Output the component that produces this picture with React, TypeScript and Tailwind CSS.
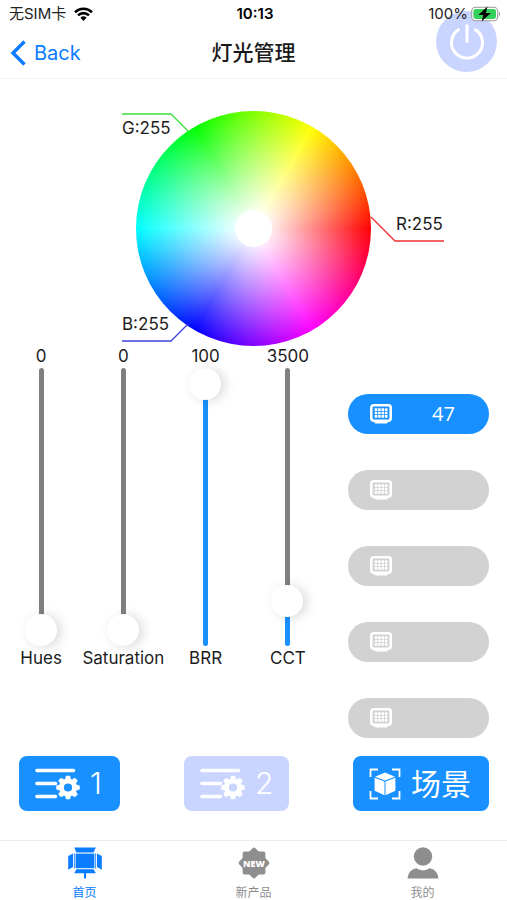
import { useState } from 'react';
import type { CSSProperties } from 'react';

type Channel = {
  id: string;
  label: string;
  min: number;
  max: number;
  value: number;
};

const CHANNELS: Channel[] = [
  { id: 'hues', label: 'Hues', min: 0, max: 360, value: 0 },
  { id: 'saturation', label: 'Saturation', min: 0, max: 100, value: 0 },
  { id: 'brr', label: 'BRR', min: 0, max: 100, value: 100 },
  { id: 'cct', label: 'CCT', min: 2700, max: 9500, value: 3500 },
];

const DEVICES = ['47', '', '', '', ''];

const GEAR_TEETH = [0, 45, 90, 135, 180, 225, 270, 315];

function WifiIcon() {
  return (
    <svg className="w-[19px] h-[14px]" viewBox="0 0 19 14" fill="none" stroke="#000" strokeWidth="2.6">
      <path d="M1 5.2a12.2 12.2 0 0 1 17 0" />
      <path d="M4 8.4a7.8 7.8 0 0 1 11 0" />
      <path d="M9.5 14 6.4 10.7a4.6 4.6 0 0 1 6.2 0z" fill="#000" stroke="none" />
    </svg>
  );
}

function BatteryIcon() {
  return (
    <svg className="w-[30px] h-[16px]" viewBox="0 0 30 16">
      <rect x="0.7" y="1.2" width="26" height="13.6" rx="4" fill="#fff" stroke="#9a9a9a" strokeWidth="1.1" />
      <path d="M28 5.8c1.4.4 1.4 4 0 4.4z" fill="#9a9a9a" />
      <rect x="2.4" y="3" width="22.6" height="10" rx="2.4" fill="#35cf5b" />
      <path d="M16.5 0.6 7.4 9h5L10.6 15.6 19.8 7h-5z" fill="#000" />
    </svg>
  );
}

function PanelIcon() {
  return (
    <svg className="w-[22px] h-5 shrink-0" viewBox="0 0 22 20" fill="none" stroke="#fff">
      <rect x="1.3" y="1.3" width="19.4" height="15.4" rx="2.4" strokeWidth="2.6" />
      <path d="M5.6 18h10.8" strokeWidth="2.8" strokeLinecap="round" />
      <path d="M4.7 5.6h12.8M4.7 9h12.8M4.7 12.4h12.8" strokeWidth="2.6" strokeDasharray="2.6 0.8" />
    </svg>
  );
}

function ListGearIcon() {
  return (
    <svg className="w-[45px] h-8 shrink-0" viewBox="0 0 45 32" fill="none" stroke="#fff">
      <path d="M2 2.5h36.5M2 15.5h18.5M2 28.5h18.5" strokeWidth="3.6" strokeLinecap="round" />
      <circle cx="33" cy="19.5" r="6.4" strokeWidth="4.6" />
      {GEAR_TEETH.map((angle) => (
        <path
          key={angle}
          d="M29.8 12.5l1.4-4.6h3.6l1.4 4.6z"
          fill="#fff"
          strokeWidth="0.4"
          transform={`rotate(${angle} 33 19.5)`}
        />
      ))}
    </svg>
  );
}

function SceneIcon() {
  return (
    <svg className="w-8 h-8 shrink-0" viewBox="0 0 32 32">
      <path
        d="M1.5 9V1.5H9M23 1.5h7.5V9M30.5 23v7.5H23M9 30.5H1.5V23"
        fill="none"
        stroke="#fff"
        strokeWidth="1.8"
      />
      <path d="M16 4.6 26 8.7 16 12.6 6 8.7z" fill="#fff" />
      <path d="M5.6 9.8 15.5 13.6V27.2L5.6 22.8z" fill="#fff" />
      <path d="M26.4 9.8 16.5 13.6V27.2L26.4 22.8z" fill="#fff" />
    </svg>
  );
}

function LampIcon() {
  return (
    <svg className="w-[34px] h-8" viewBox="0 0 34 32" fill="#0a7cff">
      <path d="M6.2 0.5h21.6l-2.2 4.9H8.4z" />
      <rect x="7.6" y="6.6" width="18.8" height="14.6" />
      <path d="M8.4 22.2h17.2l2.2 4H6.2z" />
      <path d="M0.2 9 5 6.4v13.6L0.2 22.8z" />
      <path d="M33.8 9 29 6.4v13.6l4.8 2.8z" />
      <path d="M16 25h2v6.5h-2z" />
      <path d="M6.4 6.2v15.4M27.6 6.2v15.4" stroke="#0a7cff" strokeWidth="0.8" />
    </svg>
  );
}

function NewIcon() {
  return (
    <svg className="w-8 h-8" viewBox="0 0 32 32">
      <g fill="#8e8e8e" stroke="#8e8e8e" strokeWidth="4" strokeLinejoin="round">
        <rect x="6.6" y="6.6" width="18.8" height="18.8" />
        <rect x="6.6" y="6.6" width="18.8" height="18.8" transform="rotate(45 16 16)" />
      </g>
      <text
        x="16"
        y="19.5"
        textAnchor="middle"
        fill="#fff"
        className="font-['Open_Sans',sans-serif] text-[9px] font-extrabold"
      >
        NEW
      </text>
    </svg>
  );
}

function PersonIcon() {
  return (
    <svg className="w-8 h-8" viewBox="0 0 32 32" fill="#8e8e8e">
      <circle cx="16" cy="9.5" r="9.2" />
      <path d="M0.6 31.5c.4-6 4-9.600 9-10.300 4 2.800 8.800 2.800 12.800 0 5 .7 8.600 4.300 9 10.300z" />
    </svg>
  );
}

const TABS = [
  { label: '首页', Icon: LampIcon, active: true },
  { label: '新产品', Icon: NewIcon, active: false },
  { label: '我的', Icon: PersonIcon, active: false },
];

function Header() {
  return (
    <header className="relative border-b border-[#f3f3f3]">
      {/* power toggle sits behind the battery */}
      <button
        type="button"
        aria-label="Power"
        className="absolute top-[11px] right-2.5 flex size-[61px] items-center justify-center rounded-full bg-[#c9d5ff]"
      >
        <svg className="size-9" viewBox="0 0 36 36" fill="none" stroke="#fff" strokeWidth="3">
          <path d="M10.5 5.1a15.5 15.5 0 1 0 15 0" />
          <path d="M18 0.5v18" />
        </svg>
      </button>

      {/* status bar */}
      <div className="relative grid h-7 grid-cols-3 items-center pl-[9px] pr-1.5 text-[15px] text-[#222] pointer-events-none">
        <div className="flex items-center gap-2">
          <span>无SIM卡</span>
          <WifiIcon />
        </div>
        <span className="text-center font-semibold text-black">10:13</span>
        <div className="flex items-center justify-end gap-[3px]">
          <span>100%</span>
          <BatteryIcon />
        </div>
      </div>

      {/* nav bar */}
      <div className="grid h-[50px] grid-cols-[1fr_auto_1fr] items-center px-2.5">
        <a href="#back" className="flex items-center gap-2 text-xl text-[#0a7cff]">
          <svg className="w-4 h-[26px]" viewBox="0 0 16 26" fill="none" stroke="currentColor" strokeWidth="3.4">
            <path d="M14.5 1.5 3 13l11.5 11.5" />
          </svg>
          Back
        </a>
        <h1 className="text-[21px] font-medium text-[#1a1a1a]">灯光管理</h1>
      </div>
    </header>
  );
}

function ColorWheel() {
  return (
    <div className="relative mx-auto size-[235px]">
      <div className="flex size-full items-center justify-center rounded-full bg-[radial-gradient(closest-side,#fff_8%,transparent_100%),conic-gradient(from_90deg,#f00,#f0f,#00f,#0ff,#0f0,#ff0,#f00)]">
        <div className="size-[37px] rounded-full bg-white" />
      </div>
      <svg className="absolute inset-0 size-full overflow-visible" viewBox="0 0 235 235" fill="none" strokeWidth="1.3">
        <path d="M-14 3h49l17 17" stroke="#3de03d" />
        <path d="M235 106l24 24h49" stroke="#f03030" />
        <path d="M-14 230h49l17-17" stroke="#4040e0" />
      </svg>
      <span className="absolute -left-3.5 top-[7px] leading-5">G:255</span>
      <span className="absolute left-[260px] top-[103px] leading-5">R:255</span>
      <span className="absolute -left-3.5 top-[203px] leading-5">B:255</span>
    </div>
  );
}

function ChannelSlider({ channel }: { channel: Channel }) {
  const [value, setValue] = useState(channel.value);
  const fill = ((value - channel.min) / (channel.max - channel.min)) * 100;

  return (
    <div className="flex flex-col items-center gap-0.5">
      <output htmlFor={channel.id} className="leading-5">{value}</output>
      <input
        id={channel.id}
        type="range"
        min={channel.min}
        max={channel.max}
        value={value}
        onChange={(e) => setValue(Number(e.target.value))}
        style={{ '--fill': `${fill}%` } as CSSProperties}
        className="h-[278px] w-8 appearance-none bg-transparent [writing-mode:vertical-lr] [direction:rtl] [&::-webkit-slider-runnable-track]:w-[5px] [&::-webkit-slider-runnable-track]:rounded-full [&::-webkit-slider-runnable-track]:bg-[linear-gradient(to_top,#1890ff_var(--fill),#808080_var(--fill))] [&::-webkit-slider-thumb]:-ml-3.5 [&::-webkit-slider-thumb]:size-8 [&::-webkit-slider-thumb]:appearance-none [&::-webkit-slider-thumb]:rounded-full [&::-webkit-slider-thumb]:bg-white [&::-webkit-slider-thumb]:shadow-[4px_1px_12px_rgba(0,0,0,0.15)]"
      />
      <label htmlFor={channel.id} className="leading-5">{channel.label}</label>
    </div>
  );
}

export default function App() {
  return (
    <div className="flex min-h-screen flex-col bg-white font-['Inter','Noto_Sans_CJK_SC',sans-serif] text-[17px] text-[#1c1c1c]">
      <Header />

      <main className="flex-1 pt-8">
        <ColorWheel />

        <section className="flex pr-[18px]">
          <div className="grid flex-1 grid-cols-4">
            {CHANNELS.map((channel) => (
              <ChannelSlider key={channel.id} channel={channel} />
            ))}
          </div>
          <div className="ml-[19px] flex w-[141px] flex-col gap-9 pt-12">
            {DEVICES.map((name, idx) => (
              <button
                key={idx}
                type="button"
                aria-label={`Device ${idx + 1}`}
                className={`flex h-10 items-center gap-10 rounded-full pl-[22px] font-['Open_Sans',sans-serif] text-xl text-white ${
                  name ? 'bg-[#1890ff]' : 'bg-[#d2d2d2]'
                }`}
              >
                <PanelIcon />
                {name}
              </button>
            ))}
          </div>
        </section>

        {/* presets */}
        <div className="mt-[18px] flex justify-between pl-[19px] pr-[18px] text-[30px] font-light text-white">
          <button type="button" className="flex h-[55px] w-[101px] items-center gap-2.5 rounded-lg bg-[#1890ff] pl-4">
            <ListGearIcon />1
          </button>
          <button type="button" className="flex h-[55px] w-[105px] items-center gap-2.5 rounded-lg bg-[#c9d5ff] pl-4">
            <ListGearIcon />2
          </button>
          <button type="button" className="flex h-[55px] w-[136px] items-center gap-2.5 rounded-lg bg-[#1890ff] pl-4 font-normal whitespace-nowrap">
            <SceneIcon />
            <span className="pt-0.5">场景</span>
          </button>
        </div>
      </main>

      <nav className="grid h-[60px] grid-cols-3 border-t border-[#ececec] text-xs">
        {TABS.map(({ label, Icon, active }) => (
          <a
            key={label}
            href="#tab"
            className={`flex flex-col items-center gap-1.5 pt-1.5 ${active ? 'text-[#0a7cff]' : 'text-[#8e8e8e]'}`}
          >
            <Icon />
            {label}
          </a>
        ))}
      </nav>
    </div>
  );
}
